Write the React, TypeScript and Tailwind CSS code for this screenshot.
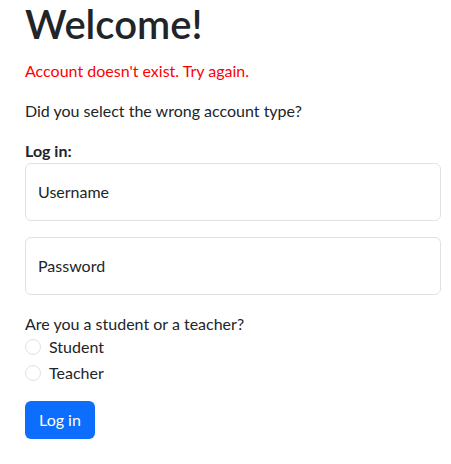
export default function App() {
  return (
    <div className="pl-[25px] pr-[10px] text-[#212529] font-['Lato',sans-serif] text-base leading-6">
      <h1 className="text-[40px] font-semibold leading-[1.2] mb-[11px]">Welcome!</h1>
      <p className="text-[#ff0000] mb-4">Account doesn't exist. Try again.</p>
      <p className="mb-4">Did you select the wrong account type?</p>
      <form className="flex flex-col">
        <p className="font-bold">Log in:</p>
        <div className="relative mb-4">
          <input
            type="text"
            placeholder=" "
            className="block w-full h-[58px] border border-[#dee2e6] rounded-[6px] px-3 bg-white outline-none"
          />
          <label className="absolute left-[13px] top-[17px] pointer-events-none">Username</label>
        </div>
        <div className="relative mb-4">
          <input
            type="password"
            placeholder=" "
            className="block w-full h-[58px] border border-[#dee2e6] rounded-[6px] px-3 bg-white outline-none"
          />
          <label className="absolute left-[13px] top-[17px] pointer-events-none">Password</label>
        </div>
        <p className="mt-[1px]">Are you a student or a teacher?</p>
        <label className="flex items-center gap-2 h-[26px] -mt-[2px]">
          <span className="w-4 h-4 rounded-full border border-[#dee2e6] bg-white shrink-0" />
          Student
        </label>
        <label className="flex items-center gap-2 h-[26px]">
          <span className="w-4 h-4 rounded-full border border-[#dee2e6] bg-white shrink-0" />
          Teacher
        </label>
        <div className="mt-[15px]">
          <button
            type="button"
            className="bg-[#0d6efd] text-white rounded-[6px] px-[14px] h-[38px] leading-6"
          >
            Log in
          </button>
        </div>
      </form>
    </div>
  );
}
